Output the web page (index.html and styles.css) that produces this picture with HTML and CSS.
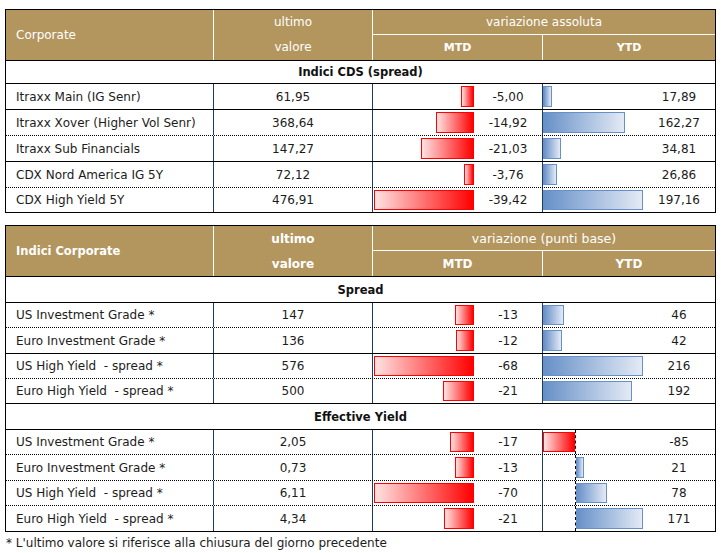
FILE: index.html
```html
<!DOCTYPE html>
<html lang="it">
<head>
<meta charset="utf-8">
<title>Corporate</title>
<link rel="stylesheet" href="styles.css">
</head>
<body>
<div class="page">

  <div class="tbl">
    <div class="head">
      <div class="h-name">Corporate</div>
      <div class="h-val"><span>ultimo</span><span>valore</span></div>
      <div class="h-var">variazione assoluta</div>
      <div class="h-mtd">MTD</div>
      <div class="h-ytd">YTD</div>
    </div>
    <div class="sec s23">Indici CDS (spread)</div>

    <div class="row">
      <div class="name">Itraxx Main (IG Senr)</div>
      <div class="cell val">61,95</div>
      <div class="cell chart"><div class="zone mtd"><div class="bar neg" style="width:13px"></div></div><div class="num">-5,00</div></div>
      <div class="cell chart"><div class="zone ytd"><div class="bar pos" style="width:9px"></div></div><div class="num">17,89</div></div>
    </div>
    <div class="row">
      <div class="name">Itraxx Xover (Higher Vol Senr)</div>
      <div class="cell val">368,64</div>
      <div class="cell chart"><div class="zone mtd"><div class="bar neg" style="width:38px"></div></div><div class="num">-14,92</div></div>
      <div class="cell chart"><div class="zone ytd"><div class="bar pos" style="width:82px"></div></div><div class="num">162,27</div></div>
    </div>
    <div class="row dot">
      <div class="name">Itraxx Sub Financials</div>
      <div class="cell val">147,27</div>
      <div class="cell chart"><div class="zone mtd"><div class="bar neg" style="width:53px"></div></div><div class="num">-21,03</div></div>
      <div class="cell chart"><div class="zone ytd"><div class="bar pos" style="width:18px"></div></div><div class="num">34,81</div></div>
    </div>
    <div class="row">
      <div class="name">CDX Nord America IG 5Y</div>
      <div class="cell val">72,12</div>
      <div class="cell chart"><div class="zone mtd"><div class="bar neg" style="width:10px"></div></div><div class="num">-3,76</div></div>
      <div class="cell chart"><div class="zone ytd"><div class="bar pos" style="width:14px"></div></div><div class="num">26,86</div></div>
    </div>
    <div class="row dot r25">
      <div class="name">CDX High Yield 5Y</div>
      <div class="cell val">476,91</div>
      <div class="cell chart"><div class="zone mtd"><div class="bar neg" style="width:100px"></div></div><div class="num">-39,42</div></div>
      <div class="cell chart"><div class="zone ytd"><div class="bar pos" style="width:100px"></div></div><div class="num">197,16</div></div>
    </div>
  </div>

  <div class="tbl tbl2">
    <div class="head bold">
      <div class="h-name">Indici Corporate</div>
      <div class="h-val big"><span>ultimo</span><span>valore</span></div>
      <div class="h-var">variazione (punti base)</div>
      <div class="h-mtd big">MTD</div>
      <div class="h-ytd big">YTD</div>
    </div>
    <div class="sec">Spread</div>

    <div class="row r25">
      <div class="name">US Investment Grade *</div>
      <div class="cell val">147</div>
      <div class="cell chart"><div class="zone mtd"><div class="bar neg" style="width:19px"></div></div><div class="num">-13</div></div>
      <div class="cell chart"><div class="zone ytd"><div class="bar pos" style="width:21px"></div></div><div class="num">46</div></div>
    </div>
    <div class="row dot">
      <div class="name">Euro Investment Grade *</div>
      <div class="cell val">136</div>
      <div class="cell chart"><div class="zone mtd"><div class="bar neg" style="width:18px"></div></div><div class="num">-12</div></div>
      <div class="cell chart"><div class="zone ytd"><div class="bar pos" style="width:19px"></div></div><div class="num">42</div></div>
    </div>
    <div class="row r25">
      <div class="name">US High Yield&nbsp; - spread *</div>
      <div class="cell val">576</div>
      <div class="cell chart"><div class="zone mtd"><div class="bar neg" style="width:100px"></div></div><div class="num">-68</div></div>
      <div class="cell chart"><div class="zone ytd"><div class="bar pos" style="width:100px"></div></div><div class="num">216</div></div>
    </div>
    <div class="row dot r25">
      <div class="name">Euro High Yield&nbsp; - spread *</div>
      <div class="cell val">500</div>
      <div class="cell chart"><div class="zone mtd"><div class="bar neg" style="width:31px"></div></div><div class="num">-21</div></div>
      <div class="cell chart"><div class="zone ytd"><div class="bar pos" style="width:89px"></div></div><div class="num">192</div></div>
    </div>

    <div class="sec">Effective Yield</div>

    <div class="row r25">
      <div class="name">US Investment Grade *</div>
      <div class="cell val">2,05</div>
      <div class="cell chart"><div class="zone mtd"><div class="bar neg" style="width:24px"></div></div><div class="num">-17</div></div>
      <div class="cell chart"><div class="zone split"><div class="negpart"><div class="bar neg" style="width:32px"></div></div><div class="pospart"></div></div><div class="num">-85</div></div>
    </div>
    <div class="row dot">
      <div class="name">Euro Investment Grade *</div>
      <div class="cell val">0,73</div>
      <div class="cell chart"><div class="zone mtd"><div class="bar neg" style="width:19px"></div></div><div class="num">-13</div></div>
      <div class="cell chart"><div class="zone split"><div class="negpart"></div><div class="pospart"><div class="bar pos" style="width:8px"></div></div></div><div class="num">21</div></div>
    </div>
    <div class="row dot r25">
      <div class="name">US High Yield&nbsp; - spread *</div>
      <div class="cell val">6,11</div>
      <div class="cell chart"><div class="zone mtd"><div class="bar neg" style="width:100px"></div></div><div class="num">-70</div></div>
      <div class="cell chart"><div class="zone split"><div class="negpart"></div><div class="pospart"><div class="bar pos" style="width:31px"></div></div></div><div class="num">78</div></div>
    </div>
    <div class="row dot">
      <div class="name">Euro High Yield&nbsp; - spread *</div>
      <div class="cell val">4,34</div>
      <div class="cell chart"><div class="zone mtd"><div class="bar neg" style="width:30px"></div></div><div class="num">-21</div></div>
      <div class="cell chart"><div class="zone split"><div class="negpart"></div><div class="pospart"><div class="bar pos" style="width:67px"></div></div></div><div class="num">171</div></div>
    </div>
  </div>

  <p class="note">* L'ultimo valore si riferisce alla chiusura del giorno precedente</p>
</div>
</body>
</html>
```

FILE: styles.css
```css
* { box-sizing: border-box; }

html, body {
  margin: 0;
  padding: 0;
  background: #ffffff;
}

body {
  font-family: "DejaVu Sans", "Liberation Sans", sans-serif;
  font-size: 12px;
  color: #1c1c1c;
}

.page {
  padding: 9px 0 0 5px;
}

.tbl {
  width: 711px;
  border: 1px solid #000;
}

.tbl2 {
  margin-top: 12px;
}

/* header */
.head {
  display: grid;
  grid-template-columns: 207px 159px 170px 173px;
  grid-template-rows: 24px 26px;
  background: #b3955e;
  color: #ffffff;
}

.h-name {
  grid-column: 1;
  grid-row: 1 / 3;
  display: flex;
  align-items: center;
  padding-left: 10px;
}

.h-val {
  grid-column: 2;
  grid-row: 1 / 3;
  border-left: 1px solid #ffffff;
  display: grid;
  grid-template-rows: 24px 26px;
}

.h-val span {
  display: flex;
  align-items: center;
  justify-content: center;
}

.h-var {
  grid-column: 3 / 5;
  grid-row: 1;
  border-left: 1px solid #ffffff;
  display: flex;
  align-items: center;
  justify-content: center;
}

.h-mtd,
.h-ytd {
  grid-row: 2;
  border-left: 1px solid #ffffff;
  border-top: 1px solid #ffffff;
  display: flex;
  align-items: center;
  justify-content: center;
  font-size: 11px;
  font-weight: bold;
}

.h-mtd { grid-column: 3; }
.h-ytd { grid-column: 4; }

.head.bold .h-name {
  font-weight: bold;
  font-size: 11.5px;
}

.head.bold .h-var {
  font-size: 12.5px;
}

.head .big {
  font-weight: bold;
  font-size: 12px;
}

.head.bold .h-val span {
  padding-top: 2px;
}

/* section rows */
.sec {
  border-top: 1px solid #000;
  height: 26px;
  display: flex;
  align-items: center;
  justify-content: center;
  font-weight: bold;
  font-size: 11.5px;
  color: #111;
}

.sec.s23 { height: 23px; }

/* data rows */
.row {
  display: grid;
  grid-template-columns: 207px 159px 170px 173px;
  height: 26px;
  border-top: 1px solid #000;
}

.row.dot { border-top: 1px dotted #000; }
.row.r25 { height: 25px; }

.name {
  display: flex;
  align-items: center;
  padding-left: 10px;
  white-space: nowrap;
}

.cell {
  display: flex;
  align-items: center;
  border-left: 1px solid #1f3c58;
}

.val { justify-content: center; }

.chart { align-items: stretch; }

.zone {
  display: flex;
  align-items: stretch;
}

.zone.mtd {
  width: 101px;
  padding-left: 1px;
  justify-content: flex-end;
}

.zone.ytd {
  width: 100px;
  justify-content: flex-start;
}

.zone.split { width: 100px; }

.negpart {
  width: 32px;
  display: flex;
  justify-content: flex-end;
}

.pospart {
  flex: 1;
  display: flex;
  border-left: 1px dashed #000;
}

.num {
  flex: 1;
  display: flex;
  align-items: center;
  justify-content: center;
}

.bar {
  margin: 2px 0;
}

.bar.neg {
  background: linear-gradient(to right, #ffe2e2, #ff0000);
  border: 1px solid #ff0000;
}

.bar.pos {
  background: linear-gradient(to right, #6790c8, #e3eaf5);
  border: 1px solid #6790c8;
}

.note {
  margin: 3px 0 0 1px;
  font-size: 12px;
  line-height: 16px;
  color: #1c1c1c;
}
```
